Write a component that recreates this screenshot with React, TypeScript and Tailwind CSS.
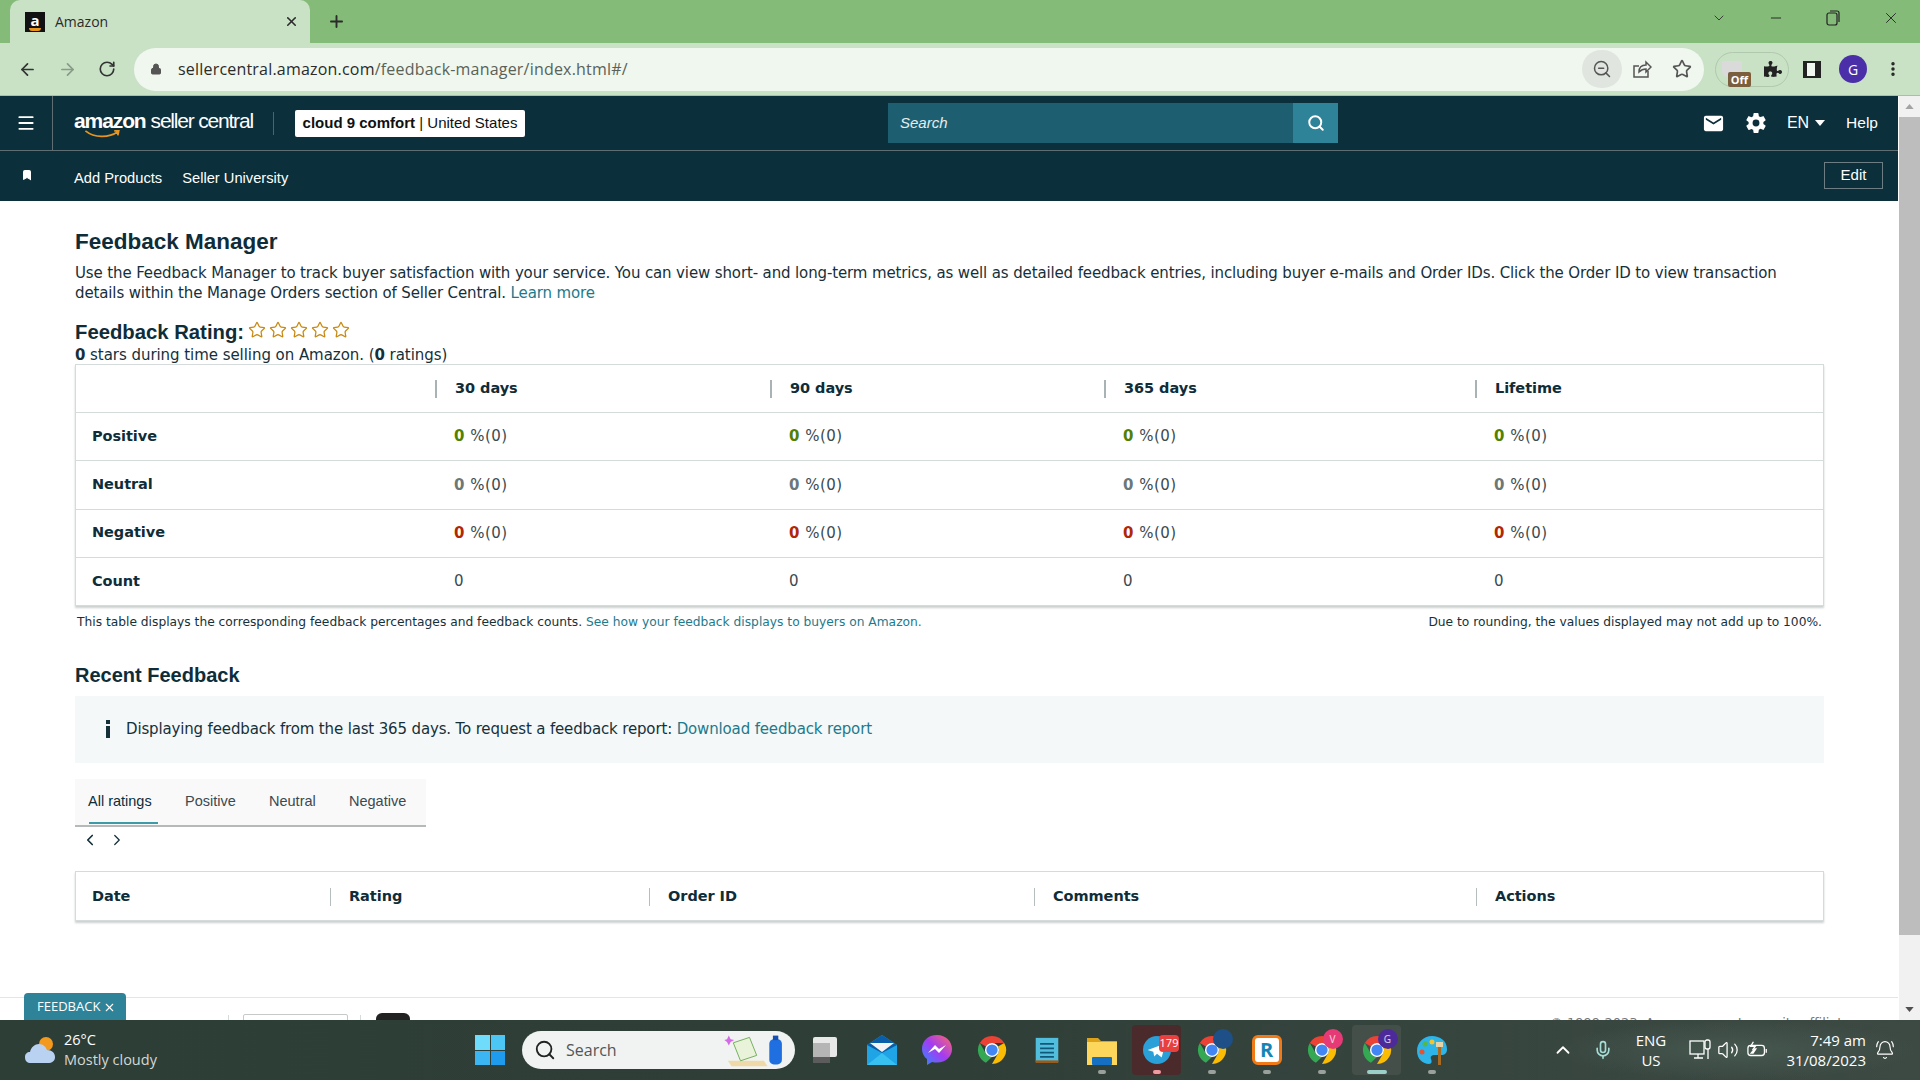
import React from 'react';
import {
  ArrowLeft, ArrowRight, RotateCw, Lock, ZoomOut, Star, MoreVertical, Search, Menu, Bookmark, X, Plus, Minus,
  ChevronDown, ChevronLeft, ChevronRight, ChevronUp, Mic, Volume2, BellRing,
} from 'lucide-react';
import { FaPuzzlePiece } from 'react-icons/fa';
import { MdEmail } from 'react-icons/md';
import { IoSettingsSharp } from 'react-icons/io5';

const ARIAL = "font-['Liberation_Sans',Arial,sans-serif]";
const BODY = "font-['DejaVu_Sans',Verdana,sans-serif]";
const UI = "font-['Open_Sans','Noto_Sans',sans-serif]";

const ratingRows = [
  { label: 'Positive', color: 'text-[#538000]' },
  { label: 'Neutral', color: 'text-[#6c7778]' },
  { label: 'Negative', color: 'text-[#b12704]' },
];

function ChromeIcon({ badge }: { badge?: React.ReactNode }) {
  return (
    <div className="relative w-[30px] h-[30px]">
      <svg viewBox="0 0 32 32" className="w-[30px] h-[30px]">
        <path d="M16 1a15 15 0 0 1 13 7.500H16a7.500 7.500 0 0 0-6.500 3.750L3 8.500A15 15 0 0 1 16 1z" fill="#ea4335" />
        <path d="M3 8.500l6.500 11.250A7.500 7.500 0 0 0 16 23.500L9.500 29.500A15 15 0 0 1 3 8.500z" fill="#34a853" />
        <path d="M29 8.500A15 15 0 0 1 16 31l6.500-11.250A7.500 7.500 0 0 0 22.500 12.250z" fill="#fbbc04" />
        <circle cx="16" cy="16" r="7.500" fill="#fff" />
        <circle cx="16" cy="16" r="6" fill="#4285f4" />
      </svg>
      {badge}
    </div>
  );
}

function Badge({ bg, text }: { bg: string; text?: string }) {
  return (
    <span className={`absolute -top-[6px] -right-[6px] w-[20px] h-[20px] rounded-full flex items-center justify-center text-[10px] text-white/80 ${bg}`}>
      {text}
    </span>
  );
}

function Slot({ dot, children }: { dot?: boolean; children: React.ReactNode }) {
  return (
    <div className="relative w-[55px] h-[50px] flex items-center justify-center">
      {children}
      {dot && <span className="absolute bottom-[1px] w-[8px] h-[4px] rounded-full bg-[#9aa09c]" />}
    </div>
  );
}

function TaskbarIcons() {
  return (
    <div className="flex items-center">
      {/* task view */}
      <Slot>
        <div className="relative w-[30px] h-[30px]">
          <div className="absolute left-[1px] top-[2px] w-[24px] h-[20px] bg-[#e8e8e8] rounded-[2px]" />
          <div className="absolute left-[1px] top-[8px] w-[17px] h-[14px] bg-[#b5b5b5]" />
          <div className="absolute left-[1px] top-[22px] w-[17px] h-[6px] bg-[#5c5c5c]" />
        </div>
      </Slot>
      {/* mail */}
      <Slot>
        <svg viewBox="0 0 30 30" className="w-[30px] h-[30px]">
          <path d="M0 10 15 0l15 10v20H0z" fill="#1fa4e6" />
          <path d="M0 10 15 0l15 10-15 8z" fill="#0a5ea8" />
          <path d="M3 8h24l-12 9z" fill="#f3f3f3" />
          <path d="M0 30 15 18l15 12z" fill="#37c0f0" />
        </svg>
      </Slot>
      {/* messenger */}
      <Slot>
        <svg viewBox="0 0 30 30" className="w-[30px] h-[30px]">
          <defs>
            <linearGradient id="msg" x1="0" y1="1" x2="1" y2="0">
              <stop offset="0" stopColor="#2b8cff" />
              <stop offset="0.5" stopColor="#a33bf2" />
              <stop offset="1" stopColor="#ff6a6a" />
            </linearGradient>
          </defs>
          <path d="M15 0C6 0 0 6 0 14c0 4 2 8 5 10v6l5-3c2 .5 3 .5 5 .5 9 0 15-6 15-13.500S24 0 15 0z" fill="url(#msg)" />
          <path d="m6 18 7-8 4 4 7-4-7 8-4-4z" fill="#fff" />
        </svg>
      </Slot>
      <Slot>
        <ChromeIcon />
      </Slot>
      {/* notepad */}
      <Slot>
        <svg viewBox="0 0 30 32" className="w-[26px] h-[32px]">
          <rect x="2" y="2" width="26" height="28" fill="#52bede" />
          <rect x="2" y="28" width="26" height="3" fill="#9a5a1c" />
          <path d="M7 9h16M7 14h16M7 19h16M7 24h16" stroke="#10587a" strokeWidth="2" />
        </svg>
      </Slot>
      {/* explorer */}
      <Slot dot>
        <svg viewBox="0 0 30 30" className="w-[30px] h-[30px]">
          <path d="M0 3h11l3 3h16v24H0z" fill="#dca21a" />
          <rect x="0" y="7" width="30" height="23" fill="#fcd75c" />
          <rect x="5" y="22" width="20" height="8" rx="1" fill="#1570c4" />
        </svg>
      </Slot>
      {/* telegram */}
      <Slot>
        <div className="w-[49px] h-[50px] rounded-[4px] bg-[#4a2a2b] relative flex items-center justify-center">
          <svg viewBox="0 0 30 30" className="w-[28px] h-[30px]">
            <circle cx="15" cy="15" r="15" fill="#2a9fd8" />
            <path d="M5 15 24 8l-4 15-5-4-3 3-1-5z" fill="#fff" />
          </svg>
          <span className="absolute top-[10px] right-[2px] h-[17px] w-[20px] rounded-[4px] bg-[#e8403e] text-white text-[11px] flex items-center justify-center">179</span>
          <span className="absolute bottom-[1px] w-[8px] h-[4px] rounded-full bg-[#f09a9f]" />
        </div>
      </Slot>
      <Slot dot>
        <ChromeIcon badge={<Badge bg="bg-[#1e4f86]" />} />
      </Slot>
      {/* R app */}
      <Slot dot>
        <div className="w-[30px] h-[30px] rounded-[6px] bg-white border-[3px] border-[#f07b16] flex items-center justify-center text-[#1585b5] font-bold text-[20px] leading-none">R</div>
      </Slot>
      <Slot dot>
        <ChromeIcon badge={<Badge bg="bg-[#e63a76]" text="V" />} />
      </Slot>
      <Slot>
        <div className="w-[49px] h-[50px] rounded-[4px] bg-[#454f4a] relative flex items-center justify-center">
          <ChromeIcon badge={<Badge bg="bg-[#4c2a9a]" text="G" />} />
          <span className="absolute bottom-[1px] w-[20px] h-[4px] rounded-full bg-[#9bd0c8]" />
        </div>
      </Slot>
      {/* paint */}
      <Slot dot>
        <svg viewBox="0 0 30 30" className="w-[30px] h-[30px]">
          <path d="M15 1C6 1 0 8 0 16c0 8 6 13 12 13 3 0 3-3 2-5-1-3 1-4 4-4h6c4 0 6-2 6-6C30 6 23 1 15 1z" fill="#2db4e8" />
          <circle cx="8" cy="9" r="2.500" fill="#55b947" />
          <circle cx="5" cy="17" r="2.500" fill="#e8502f" />
          <circle cx="15" cy="7" r="2.500" fill="#f4c430" />
          <rect x="21" y="11" width="3" height="19" fill="#a86a20" />
          <rect x="19" y="7" width="7" height="5" fill="#e6d3a8" />
        </svg>
      </Slot>
    </div>
  );
}

function Taskbar() {
  return (
    <div className={`h-[60px] shrink-0 bg-gradient-to-r from-[#2d3e37] via-[#2f3f38] to-[#3d4a44] text-white flex items-center relative z-10 ${UI}`}>
      <div className="w-[475px] pl-[25px] flex items-center gap-[9px] shrink-0">
        <svg viewBox="0 0 30 28" className="w-[30px] h-[28px]">
          <circle cx="21" cy="8" r="7" fill="#f39a1e" />
          <path d="M6 27c-4 0-6-2-6-6 0-3 2-5 5-5 1-5 5-8 9-8s7 3 8 6c5 0 8 3 8 7 0 4-3 6-7 6z" fill="#b9d2f2" />
        </svg>
        <div className="leading-[20px] text-[14.5px]">
          <div>26°C</div>
          <div className="text-[#d4d8d6]">Mostly cloudy</div>
        </div>
      </div>
      <div className="w-[30px] h-[30px] grid grid-cols-2 gap-[1px] shrink-0">
        <span className="bg-[#6fdcfb]" />
        <span className="bg-[#4cc6f5]" />
        <span className="bg-[#3cb6f3]" />
        <span className="bg-[#1f9bed]" />
      </div>
      <div className="ml-[17px] w-[273px] h-[38px] rounded-full bg-[#f0f3f2] flex items-center pl-[12px] text-[#555] text-[16px] shrink-0 relative">
        <Search className="w-[22px] h-[22px] text-[#222]" />
        <span className="ml-[10px]">Search</span>
        <svg viewBox="0 0 66 40" className="absolute right-[8px] top-[1px] w-[66px] h-[36px]">
          <path d="M4 32h40l4 6H8z" fill="#f0d9a8" />
          <path d="M10 12l18-6 8 20-18 6z" fill="#e8f3da" stroke="#6aa84f" />
          <rect x="50" y="8" width="14" height="28" rx="5" fill="#1f6fe0" />
          <rect x="54" y="4" width="6" height="5" fill="#1550b0" />
          <path d="M5 4l2 4 4 1-4 2-2 4-2-4-3-2 3-1z" fill="#d46ae8" />
        </svg>
      </div>
      <div className="ml-[4px]">
        <TaskbarIcons />
      </div>
      <div className="ml-auto flex items-center pr-[25px] bg-[radial-gradient(ellipse_at_center,#46584f_0%,transparent_70%)] h-full">
        <ChevronUp className="w-[22px] h-[22px]" />
        <Mic className="w-[20px] h-[24px] ml-[19px] text-[#a5dcd6]" />
        <div className="ml-[16px] w-[44px] text-center text-[15px] leading-[20px]">
          <div>ENG</div>
          <div>US</div>
        </div>
        <svg viewBox="0 0 22 22" className="ml-[16px] w-[22px] h-[22px]" fill="none" stroke="#fff" strokeWidth="1.300">
          <rect x="1" y="2" width="14" height="13" />
          <rect x="16" y="1" width="5" height="9" rx="2" />
          <path d="M19 10v10M5 19h9M9 15v4" />
        </svg>
        <Volume2 className="ml-[6px] w-[22px] h-[22px]" strokeWidth={1.400} />
        <svg viewBox="0 0 24 18" className="ml-[8px] w-[22px] h-[18px]" fill="none" stroke="#fff" strokeWidth="1.400">
          <rect x="1" y="4" width="18" height="11" rx="3" />
          <path d="M21 8v4" />
          <path d="M3 13 8 7h3l-4 6z" fill="#fff" stroke="none" />
          <path d="M7 0 4 5h5L6 9" />
        </svg>
        <div className="ml-[13px] w-[84px] text-right text-[15px] leading-[20px] whitespace-nowrap flex flex-col items-end">
          <div>7:49 am</div>
          <div>31/08/2023</div>
        </div>
        <BellRing className="ml-[9px] w-[20px] h-[22px]" strokeWidth={1.400} />
      </div>
    </div>
  );
}

function BrowserChrome() {
  return (
    <div className={`shrink-0 ${UI}`}>
      <div className="h-[43px] bg-[#85bb79] flex items-end pl-[10px] relative">
        <div className="w-[300px] h-[43px] bg-[#c9e2c6] rounded-t-[10px] flex items-center pl-[15px] pr-[11px] text-[#2b2b2b] text-[14px]">
          <div className="w-[20px] h-[20px] bg-[#111] relative text-white flex items-center justify-center text-[15px] font-bold leading-none pb-[3px]">
            a
            <span className="absolute bottom-[1px] left-[4px] w-[12px] h-[3px] rounded-b-full bg-[#e8941e]" />
          </div>
          <span className="ml-[10px]">Amazon</span>
          <X className="ml-auto w-[15px] h-[15px]" strokeWidth={2.500} />
        </div>
        <Plus className="ml-[17px] mb-[12px] w-[19px] h-[19px] text-[#2b2b2b]" strokeWidth={2.400} />
        <div className="absolute right-[20px] top-[9px] flex items-center gap-[41px] text-[#222]">
          <ChevronDown className="w-[16px] h-[18px]" strokeWidth={1.200} />
          <Minus className="w-[16px] h-[18px]" strokeWidth={1.400} />
          <svg viewBox="0 0 16 18" className="w-[16px] h-[18px]" fill="none" stroke="#222" strokeWidth="1.200">
            <rect x="2" y="4" width="10" height="12" rx="2" />
            <path d="M5 2h7a2 2 0 0 1 2 2v9" />
          </svg>
          <X className="w-[18px] h-[18px]" strokeWidth={1.200} />
        </div>
      </div>
      <div className="h-[53px] bg-[#c9e2c6] border-b border-[#a9bfa6] flex items-center pl-[18px] pr-[16px] text-[#333]">
        <ArrowLeft className="w-[19px] h-[19px]" strokeWidth={2.200} />
        <ArrowRight className="ml-[21px] w-[19px] h-[19px] text-[#8a9a88]" strokeWidth={2.200} />
        <RotateCw className="ml-[21px] w-[18px] h-[18px]" strokeWidth={2.200} />
        <div className="ml-[18px] w-[1570px] h-[43px] rounded-full bg-[#f0f7ef] flex items-center pl-[16px] pr-[12px] shrink-0">
          <Lock className="w-[12px] h-[14px] text-[#555] fill-[#555]" />
          <span className="ml-[16px] text-[16px] text-[#2b2b2b] tracking-[0.2px]">
            sellercentral.amazon.com<span className="text-[#5a6258]">/feedback-manager/index.html#/</span>
          </span>
          <div className="ml-auto flex items-center text-[#555]">
            <div className="w-[40px] h-[38px] rounded-full bg-[#e0e6df] flex items-center justify-center">
              <ZoomOut className="w-[20px] h-[20px]" strokeWidth={1.800} />
            </div>
            <svg viewBox="0 0 20 20" className="ml-[10px] w-[20px] h-[20px]" fill="none" stroke="#555" strokeWidth="1.500">
              <path d="M16 12v6H2V7h5" />
              <path d="M7 13c0-5 3-7 7-7V3l5 5-5 5v-3c-3 0-5 1-7 3z" />
            </svg>
            <Star className="ml-[20px] w-[20px] h-[20px]" strokeWidth={2} />
          </div>
        </div>
        <div className="ml-[11px] w-[74px] h-[35px] rounded-full border border-[#b0c8ad] flex items-center pl-[6px] relative">
          <div className="w-[20px] h-[16px] rounded-b-[6px] bg-[#dadada]" />
          <span className="absolute left-[12px] top-[19px] w-[23px] h-[15px] rounded-[2px] bg-[#7b5e3e] text-white text-[11px] font-bold leading-[15px] text-center">Off</span>
          <FaPuzzlePiece className="absolute right-[6px] top-[7px] w-[18px] h-[18px] text-[#222]" />
        </div>
        <div className="ml-[14px] w-[18px] h-[17px] border-[2px] border-[#222] border-l-[4px] border-r-[6px] bg-[#f0f7ef]" />
        <div className="ml-[18px] w-[28px] h-[28px] rounded-full bg-[#4a2fa8] text-white text-[14px] flex items-center justify-center">G</div>
        <MoreVertical className="ml-[17px] w-[18px] h-[18px] text-[#222]" strokeWidth={2.600} />
      </div>
    </div>
  );
}

function SellerNav() {
  return (
    <div className={`bg-[#0b2f3b] text-white text-[14.700px] shrink-0 ${ARIAL}`}>
      <div className="h-[55px] border-b border-[#5f6e73] flex items-center relative">
        <div className="w-[53px] h-full border-r border-[#5f6e73] flex items-center justify-center shrink-0">
          <Menu className="w-[20px] h-[20px]" strokeWidth={2.200} />
        </div>
        <div className="ml-[21px] w-[180px] relative leading-none whitespace-nowrap flex items-baseline -mt-[5px]">
          <span className="text-[21px] font-bold tracking-[-1.100px]">amazon</span>
          <span className="ml-[5px] text-[21px] tracking-[-1.200px]">seller central</span>
          <svg viewBox="0 0 40 10" className="absolute left-[10px] top-[20px] w-[37px] h-[9px]" fill="none" stroke="#e8941e" strokeWidth="2">
            <path d="M1 1c10 8 26 8 36 1M33 1l5 0-1 5" />
          </svg>
        </div>
        <div className="ml-[19px] w-px h-[23px] bg-[#4e636a]" />
        <div className="ml-[21px] w-[230px] h-[27px] rounded-[2px] bg-white text-[#0f1111] text-[15px] flex items-center justify-center whitespace-nowrap">
          <b>cloud 9 comfort</b>&nbsp;|&nbsp;United States
        </div>
        <div className="ml-[363px] w-[450px] h-[40px] flex">
          <div className="flex-1 bg-[#1d5f70] italic text-[15px] text-[#e3edef] pl-[12px] pt-[1px] flex items-center">Search</div>
          <div className="w-[45px] bg-[#2e8399] flex items-center justify-center">
            <Search className="w-[18px] h-[18px]" strokeWidth={2.600} />
          </div>
        </div>
        <div className="ml-auto pr-[20px] flex items-center">
          <MdEmail className="w-[23px] h-[23px]" />
          <IoSettingsSharp className="ml-[20px] w-[22px] h-[22px]" />
          <span className="ml-[20px] text-[16px]">EN</span>
          <svg viewBox="0 0 10 6" className="ml-[6px] w-[10px] h-[6px]"><path d="M0 0h10L5 6z" fill="#fff" /></svg>
          <span className="ml-[21px] text-[15.500px]">Help</span>
        </div>
      </div>
      <div className="h-[50px] flex items-center">
        <Bookmark className="ml-[21px] w-[12px] h-[14px] fill-white -mt-[2px]" />
        <span className="ml-[41px] mt-[5px]">Add Products</span>
        <span className="ml-[20px] mt-[5px]">Seller University</span>
        <div className="ml-auto mr-[15px] w-[59px] h-[27px] border border-[#6c7d83] flex items-center justify-center text-[15px] -mt-[2px]">Edit</div>
      </div>
    </div>
  );
}

function HeaderCell({ children }: { children: string }) {
  return (
    <div className="flex items-center">
      <span className="w-[2px] h-[18px] bg-[#a9b3b5]" />
      <span className="ml-[18px]">{children}</span>
    </div>
  );
}

function RatingTable() {
  const cols = 'grid grid-cols-[359px_335px_334px_371px_1fr]';
  return (
    <div className="-mt-[1px] w-[1749px] border border-[#d5dbdb] shadow-[0_2px_2px_#ccd0d0] text-[14.5px]">
      <div className={`${cols} h-[47px] items-center font-bold text-[#0f2d38]`}>
        <div />
        <HeaderCell>30 days</HeaderCell>
        <HeaderCell>90 days</HeaderCell>
        <HeaderCell>365 days</HeaderCell>
        <HeaderCell>Lifetime</HeaderCell>
      </div>
      {ratingRows.map((row) => (
        <div key={row.label} className={`${cols} h-[48.250px] items-center border-t border-[#d5dbdb]`}>
          <div className="pl-[16px] font-bold text-[#0f2d38]">{row.label}</div>
          {[0, 1, 2, 3].map((i) => (
            <div key={i} className="pl-[19px] text-[15px] tracking-[0.5px] text-[#3b4a50]">
              <b className={row.color}>0</b> %(0)
            </div>
          ))}
        </div>
      ))}
      <div className={`${cols} h-[48.250px] items-center border-t border-[#d5dbdb]`}>
        <div className="pl-[16px] font-bold text-[#0f2d38]">Count</div>
        {[0, 1, 2, 3].map((i) => (
          <div key={i} className="pl-[19px] text-[15px] text-[#3b4a50]">0</div>
        ))}
      </div>
    </div>
  );
}

function RecentTable() {
  const heads = [
    { label: 'Date', w: 'w-[254px]', first: true },
    { label: 'Rating', w: 'w-[319px]' },
    { label: 'Order ID', w: 'w-[385px]' },
    { label: 'Comments', w: 'w-[442px]' },
    { label: 'Actions', w: 'flex-1' },
  ];
  return (
    <div className="mt-[22px] w-[1749px] h-[50px] border border-[#d5dbdb] shadow-[0_2px_2px_#ccd0d0] flex items-center text-[14.5px] font-bold text-[#0f2d38] pt-[2px]">
      {heads.map((h) => (
        <div key={h.label} className={`flex items-center ${h.w}`}>
          {h.first ? <span className="ml-[16px]">{h.label}</span> : (
            <>
              <span className="w-px h-[18px] bg-[#b5bdbf]" />
              <span className="ml-[18px]">{h.label}</span>
            </>
          )}
        </div>
      ))}
    </div>
  );
}

export default function App() {
  return (
    <div className="h-screen w-screen overflow-hidden flex flex-col bg-white">
      <BrowserChrome />
      <div className="flex-1 min-h-0 flex">
        <div className="flex-1 min-w-0 flex flex-col">
          <SellerNav />
          <main className={`flex-1 min-h-0 pl-[75px] pt-[27px] text-[#0f1111] text-[15px] tracking-[-0.05px] relative overflow-hidden ${BODY}`}>
            <h1 className={`text-[22.500px] leading-[28px] font-bold text-[#0f2d38] tracking-normal ${ARIAL}`}>Feedback Manager</h1>
            <p className="mt-[7px] w-[1749px] leading-[20px] text-[#16303a] tracking-[-0.13px]">
              Use the Feedback Manager to track buyer satisfaction with your service. You can view short- and long-term metrics, as well as detailed feedback entries, including buyer e-mails and Order IDs. Click the Order ID to view transaction details within the Manage Orders section of Seller Central.{' '}
              <a className="text-[#1d7a8c]">Learn more</a>
            </p>
            <div className="mt-[16px] h-[26px] flex items-center">
              <h2 className={`text-[20.300px] font-bold text-[#0f2d38] tracking-normal ${ARIAL}`}>Feedback Rating:</h2>
              <div className="ml-[4px] flex gap-[3px] -mt-[5px]">
                {[0, 1, 2, 3, 4].map((i) => (
                  <Star key={i} className="w-[18px] h-[18px] text-[#c98a12]" strokeWidth={1.700} />
                ))}
              </div>
            </div>
            <div className="leading-[20px] text-[#16303a]"><b>0</b> stars during time selling on Amazon. (<b>0</b> ratings)</div>
            <RatingTable />
            <div className="mt-[7px] w-[1749px] px-[2px] flex justify-between text-[12.250px] leading-[18px] tracking-normal text-[#16303a]">
              <span>This table displays the corresponding feedback percentages and feedback counts. <a className="text-[#1d7a8c]">See how your feedback displays to buyers on Amazon.</a></span>
              <span>Due to rounding, the values displayed may not add up to 100%.</span>
            </div>
            <h2 className={`mt-[30px] text-[20px] leading-[28px] font-bold text-[#0f2d38] tracking-normal ${ARIAL}`}>Recent Feedback</h2>
            <div className="mt-[7px] w-[1749px] h-[67px] bg-[#f4f8f9] flex items-center pl-[30px] text-[#16303a] tracking-[-0.15px]">
              <span className="w-[5px] flex flex-col items-center mr-[16px] -mt-[2px]">
                <span className="w-[4px] h-[4px] bg-[#16303a]" />
                <span className="mt-[2px] w-[4px] h-[12px] bg-[#16303a]" />
              </span>
              <span>Displaying feedback from the last 365 days. To request a feedback report:&nbsp;<a className="text-[#1d7a8c]">Download feedback report</a></span>
            </div>
            <div className={`mt-[16px] w-[351px] h-[48px] bg-[#f9f9f9] border-b-2 border-[#b5b9b9] flex text-[14.500px] tracking-normal text-[#3b4a50] relative pl-[13px] pt-[12px] ${ARIAL}`}>
              <span className="w-[97px] text-[#0f2d38]">All ratings</span>
              <span className="w-[84px]">Positive</span>
              <span className="w-[80px]">Neutral</span>
              <span>Negative</span>
              <span className="absolute bottom-[1px] left-[14px] w-[69px] h-[2px] bg-[#3d9ba8]" />
            </div>
            <div className="mt-[4px] ml-[6px] flex gap-[9px] text-[#0f2d38]">
              <ChevronLeft className="w-[18px] h-[18px]" strokeWidth={2.200} />
              <ChevronRight className="w-[18px] h-[18px]" strokeWidth={1.600} />
            </div>
            <RecentTable />
            {/* page footer, cut off by the taskbar */}
            <div className="absolute left-0 right-0 top-[796px] h-[30px] border-t border-[#e3e6e6]">
              <div className={`absolute left-[24px] -top-[5px] w-[102px] h-[28px] rounded-t-[4px] bg-[#2e8399] text-white text-[13px] flex items-center pl-[13px] gap-[3px] tracking-normal ${UI}`}>
                FEEDBACK <X className="w-[13px] h-[13px]" />
              </div>
              <span className="absolute left-[228px] top-[17px] w-px h-[10px] bg-[#d5dbdb]" />
              <span className="absolute left-[243px] top-[16px] w-[105px] h-[10px] rounded-t-[2px] border border-[#c5c9c9]" />
              <span className="absolute left-[360px] top-[17px] w-px h-[10px] bg-[#d5dbdb]" />
              <span className="absolute left-[376px] top-[15px] w-[34px] h-[10px] rounded-t-[6px] bg-[#222]" />
              <span className="absolute left-[1550px] top-[15px] text-[13px] text-[#777] whitespace-nowrap">© 1999-2023, Amazon.com, Inc. or its affiliates</span>
            </div>
          </main>
        </div>
        {/* scrollbar */}
        <div className="w-[22px] shrink-0 bg-[#f1f1f1] border-l border-white flex flex-col">
          <div className="h-[21px] flex items-center justify-center">
            <svg viewBox="0 0 10 6" className="w-[9px] h-[5px]"><path d="M0 6h10L5 0z" fill="#a3a3a3" /></svg>
          </div>
          <div className="h-[818px] bg-[#bdbdbd]" />
          <div className="mt-auto h-[21px] flex items-center justify-center">
            <svg viewBox="0 0 10 6" className="w-[9px] h-[5px]"><path d="M0 0h10L5 6z" fill="#505050" /></svg>
          </div>
        </div>
      </div>
      <Taskbar />
    </div>
  );
}
